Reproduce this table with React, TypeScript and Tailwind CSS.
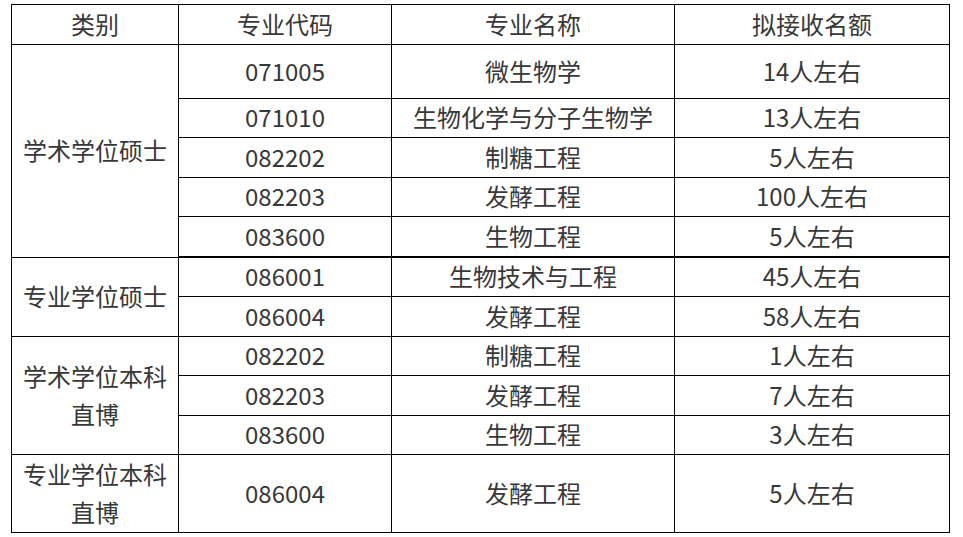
import React from "react";

const rows: { cat?: { text: React.ReactNode; span: string }; code: string; name: string; quota: string; thick?: boolean }[] = [
  { cat: { text: "学术学位硕士", span: "row-span-5" }, code: "071005", name: "微生物学", quota: "14人左右" },
  { code: "071010", name: "生物化学与分子生物学", quota: "13人左右" },
  { code: "082202", name: "制糖工程", quota: "5人左右" },
  { code: "082203", name: "发酵工程", quota: "100人左右" },
  { code: "083600", name: "生物工程", quota: "5人左右", thick: true },
  { cat: { text: "专业学位硕士", span: "row-span-2" }, code: "086001", name: "生物技术与工程", quota: "45人左右" },
  { code: "086004", name: "发酵工程", quota: "58人左右" },
  {
    cat: {
      text: (
        <>
          学术学位本科
          <br />
          直博
        </>
      ),
      span: "row-span-3",
    },
    code: "082202",
    name: "制糖工程",
    quota: "1人左右",
  },
  { code: "082203", name: "发酵工程", quota: "7人左右" },
  { code: "083600", name: "生物工程", quota: "3人左右" },
  {
    cat: {
      text: (
        <>
          专业学位本科
          <br />
          直博
        </>
      ),
      span: "row-span-1",
    },
    code: "086004",
    name: "发酵工程",
    quota: "5人左右",
  },
];

function C({ children, className = "" }: { children: React.ReactNode; className?: string }) {
  return (
    <div className={`flex items-center justify-center text-center border-r border-black pb-[2px] ${className}`}>
      <span>{children}</span>
    </div>
  );
}

export default function App() {
  return (
    <div className="w-[963px] h-[537px] bg-white pt-[4px] pl-[11px]">
      <div
        className="grid grid-cols-[167px_213px_283px_275px] grid-rows-[40px_54px_39px_40px_39px_41px_39px_40px_39px_40px_39px_78px] w-[939px] border-l border-t border-black text-[24px] leading-[38px] text-[#383838]"
        style={{ fontFamily: '"Noto Sans CJK SC", "Noto Sans", sans-serif' }}
      >
        <C className="border-b">类别</C>
        <C className="border-b">专业代码</C>
        <C className="border-b">专业名称</C>
        <C className="border-b">拟接收名额</C>
        {rows.map((r, i) => (
          <React.Fragment key={i}>
            {r.cat && <C className={`border-b ${r.cat.span}`}>{r.cat.text}</C>}
            <C className={r.thick ? "border-b-2" : "border-b"}>{r.code}</C>
            <C className={r.thick ? "border-b-2" : "border-b"}>{r.name}</C>
            <C className={r.thick ? "border-b-2" : "border-b"}>{r.quota}</C>
          </React.Fragment>
        ))}
      </div>
    </div>
  );
}
